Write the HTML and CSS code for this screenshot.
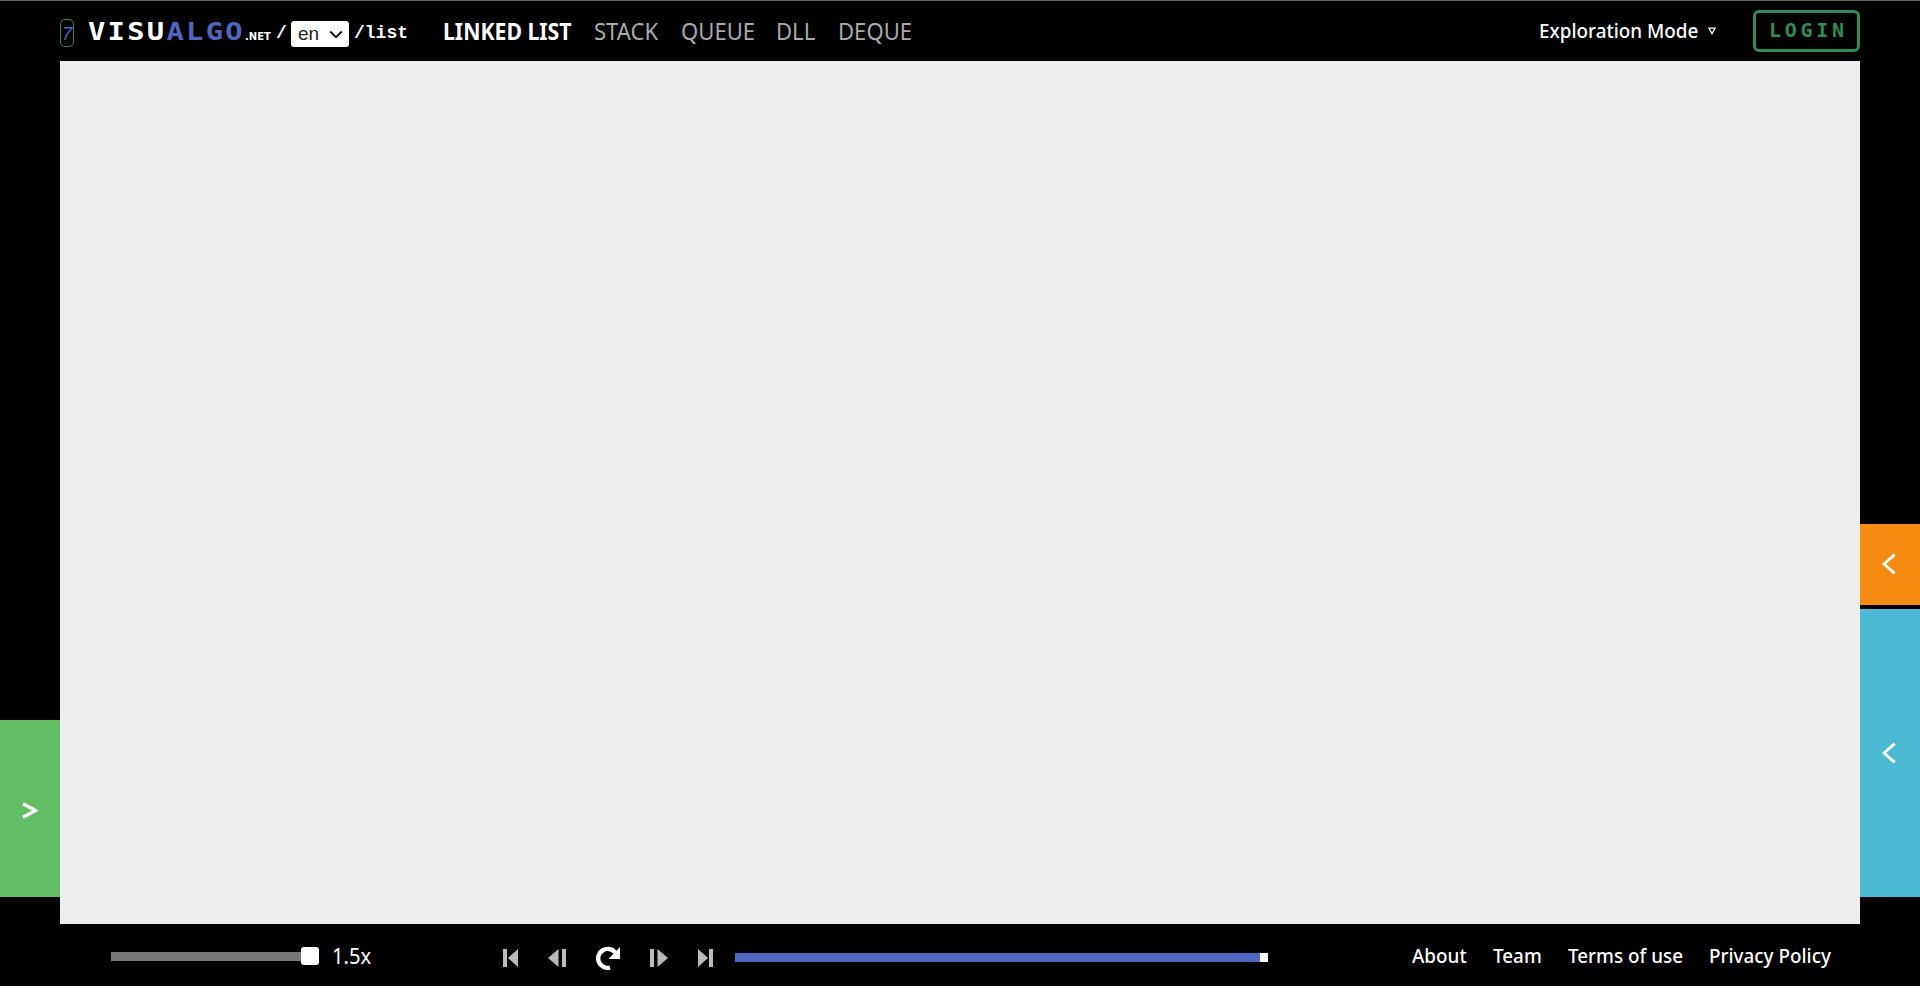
FILE: index.html
```html
<!DOCTYPE html>
<html lang="en">
<head>
<meta charset="utf-8">
<title>Linked List - VisuAlgo</title>
<link rel="stylesheet" href="styles.css">
</head>
<body>
<header class="topbar">
  <span class="badge">7</span>
  <a class="brand"><span>VISU</span><span class="brand-blue">ALGO</span></a>
  <span class="net">.NET</span>
  <span class="path slash">/</span>
  <button class="lang"><span>en</span><svg width="14" height="9" viewBox="0 0 14 9"><path d="M1.2 1.5 7 7.2l5.8-5.7"/></svg></button>
  <span class="path list">/list</span>
  <nav class="tabs">
    <a class="tab active">LINKED LIST</a>
    <a class="tab stack">STACK</a>
    <a class="tab queue">QUEUE</a>
    <a class="tab dll">DLL</a>
    <a class="tab deque">DEQUE</a>
  </nav>
  <a class="mode">Exploration Mode</a>
  <svg class="caret" width="8" height="8" viewBox="0 0 8 8"><path d="M1 1.2h6L4 6.6z"/></svg>
  <a class="login">LOGIN</a>
</header>
<main class="stage">
  <aside class="rail">
    <button class="panel green"><svg width="16" height="17" viewBox="0 0 16 17"><path d="M1 1.7 13.5 8.5 1 15.3"/></svg></button>
  </aside>
  <section class="canvas"></section>
  <aside class="rail">
    <button class="panel orange"><svg width="14" height="22" viewBox="0 0 14 22"><path d="M12.7 1.6 2 11l10.7 9.4"/></svg></button>
    <button class="panel blue"><svg width="14" height="22" viewBox="0 0 14 22"><path d="M12.7 1.6 2 11l10.7 9.4"/></svg></button>
  </aside>
</main>
<footer class="bottombar">
  <div class="speed"><span class="track"></span><span class="thumb"></span></div>
  <span class="rate">1.5x</span>
  <div class="controls">
    <svg class="first" width="15" height="18" viewBox="0 0 15 18"><path d="M0 0h4v18H0zM15 0v18L5 9z"/></svg>
    <svg class="prev" width="18" height="18" viewBox="0 0 18 18"><path d="M14 0h4v18h-4zM10.5 0v18L0 9z"/></svg>
    <svg class="replay" width="24" height="24" viewBox="0 0 24 24"><path class="arc" d="M19 6.3A9.5 9.5 0 1 0 14 21.6"/><path class="head" d="M24 1v12H12.5z"/></svg>
    <svg class="next" width="18" height="18" viewBox="0 0 18 18"><path d="M0 0h4v18H0zM7.5 0v18L18 9z"/></svg>
    <svg class="last" width="15" height="18" viewBox="0 0 15 18"><path d="M11 0h4v18h-4zM0 0v18L10 9z"/></svg>
  </div>
  <div class="progress"><span class="knob"></span></div>
  <nav class="links">
    <a class="about">About</a>
    <a class="team">Team</a>
    <a class="terms">Terms of use</a>
    <a class="privacy">Privacy Policy</a>
  </nav>
</footer>
</body>
</html>
```
FILE: styles.css
```css
* { box-sizing: border-box; }
body {
  margin: 0;
  height: 986px;
  display: grid;
  grid-template-rows: 61px 863px 62px;
  background: #000;
  color: #fff;
  font-family: "Noto Sans", "Open Sans", sans-serif;
  overflow: hidden;
}
a, span, button { white-space: nowrap; }
svg { display: block; flex: none; }
button { border: 0; padding: 0; }

.topbar {
  display: flex;
  align-items: flex-start;
  border-top: 1px solid #666;
  padding: 0 60px;
}
.badge {
  width: 14px; height: 28px; margin-top: 18px;
  border: 1px solid #2e8b57; border-radius: 5px;
  color: #5166bf; text-align: center;
  font: italic 19px/27px "Liberation Sans", sans-serif;
}
.brand {
  width: 157px; margin-left: 14px;
  font: bold 24px/24px "DejaVu Sans Mono", monospace;
  letter-spacing: 1.9px; margin-top: 19px;
  transform: scaleX(1.2); transform-origin: left;
}
.brand-blue { color: #5166bf; }
.net { width: 31px; font: bold 10px/12px "DejaVu Sans", sans-serif; margin-top: 30px; }
.path { font: bold 18px/24px "Liberation Mono", monospace; margin-top: 20px; }
.slash { width: 15px; }
.lang {
  display: flex; align-items: center; gap: 10px;
  width: 58px; height: 26px; margin-top: 20px; padding-left: 7px;
  background: #fff; border-radius: 3px;
  color: #222; font: 19px/26px "Liberation Sans", sans-serif;
}
.lang path { fill: none; stroke: #111; stroke-width: 2; }
.list { margin-left: 5px; width: 89px; }

/* Narrowed humanist labels */
.tab, .mode, .rate, .links a { transform: scaleX(.92); transform-origin: left; }

.tabs { display: flex; font-size: 24px; line-height: 32px; margin-top: 14px; }
.tab { color: #aaa; }
.tab.active { color: #fff; font-weight: 700; width: 151px; transform: scaleX(.885); }
.stack { width: 87px; }
.queue { width: 95px; }
.dll { width: 62px; }
.deque { width: 73px; }
.mode { margin-left: auto; width: 169px; font-size: 20.5px; font-weight: 500; line-height: 30px; margin-top: 14px; }
.caret { margin-top: 26px; margin-right: 37px; }
.caret path { fill: none; stroke: #fff; stroke-width: 1.3; }
.login {
  width: 107px; height: 42px; margin-top: 9px; padding-left: 13px;
  border: 3px solid #328a56; border-radius: 6px; color: #328a56;
  font: bold 20px/35px "DejaVu Sans Mono", monospace; letter-spacing: 3.7px;
}

.stage { display: grid; grid-template-columns: 60px 1800px 60px; }
.canvas { background: #eee; }
.rail { display: flex; flex-direction: column; justify-content: flex-end; gap: 4px; padding-bottom: 27px; }
.panel { display: flex; align-items: center; padding-left: 22px; }
.panel path { fill: none; stroke: #fff; stroke-width: 3.4; }
.green { height: 177px; background: #63bd66; padding-top: 4px; }
.orange { height: 81px; background: #f88b11; }
.blue { height: 288px; background: #4dbad3; }
.orange path, .blue path { stroke-width: 2.8; }
.orange svg, .blue svg { margin-bottom: 1px; }

.bottombar { display: flex; align-items: flex-start; padding-left: 111px; }
.speed { display: flex; align-items: center; width: 221px; height: 18px; margin-top: 23px; }
.track { width: 190px; height: 9px; background: #777; }
.thumb { width: 18px; height: 18px; border-radius: 3px; background: #fff; }
.rate { width: 171px; font-size: 22px; line-height: 30px; margin-top: 16px; }
.controls { display: flex; align-items: center; width: 232px; height: 24px; margin-top: 22px; }
.controls path { fill: #bbb; }
.controls .arc { fill: none; stroke: #fff; stroke-width: 4.4; }
.controls .head { fill: #fff; }
.prev { margin-left: 30px; }
.replay { margin-left: 30px; }
.next { margin-left: 30px; }
.last { margin-left: 30px; }
.progress { width: 533px; height: 9px; margin-top: 29px; background: #5166bf; display: flex; justify-content: flex-end; }
.knob { width: 8px; background: #fff; }
.links { display: flex; margin-left: 144px; font-size: 20.5px; font-weight: 500; line-height: 30px; margin-top: 16px; }
.about { width: 81px; }
.team { width: 75px; }
.terms { width: 141px; }
```
